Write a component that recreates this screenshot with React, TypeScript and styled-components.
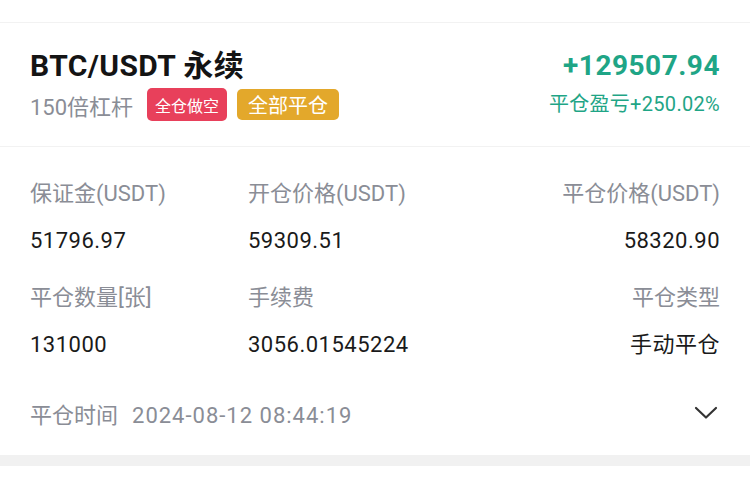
import React from "react";
import styled, { createGlobalStyle } from "styled-components";

const Global = createGlobalStyle`
  html, body { margin: 0; padding: 0; background: #ffffff; }
  body { font-family: Roboto, "Noto Sans CJK SC", sans-serif; -webkit-font-smoothing: antialiased; }
`;

const Page = styled.div`
  width: 750px;
  height: 481px;
  background: #fff;
  display: flex;
  flex-direction: column;
  overflow: hidden;
`;

const TopStrip = styled.div`
  height: 22px;
  border-bottom: 1px solid #f2f2f2;
  flex-shrink: 0;
`;

const Header = styled.div`
  display: flex;
  justify-content: space-between;
  padding: 26px 30px 25px 30px;
  border-bottom: 1px solid #f2f2f2;
`;

const Col = styled.div<{ $align?: "left" | "right" }>`
  display: flex;
  flex-direction: column;
  align-items: ${(p) => (p.$align === "right" ? "flex-end" : "flex-start")};
`;

const Title = styled.div`
  font-size: 30px;
  font-weight: 700;
  line-height: 34px;
  color: #141414;
  letter-spacing: 0.4px;
`;

const SubRow = styled.div`
  display: flex;
  align-items: center;
  gap: 10px;
  margin-top: 5px;
  height: 33px;
`;

const Leverage = styled.span`
  font-size: 22px;
  color: #8a8d96;
  margin-right: 4px;
`;

const Badge = styled.span<{ $bg: string; $size: number; $h: number; $px: number }>`
  display: inline-flex;
  align-items: center;
  justify-content: center;
  height: ${(p) => p.$h}px;
  padding: 0 ${(p) => p.$px}px;
  background: ${(p) => p.$bg};
  color: #fff;
  font-size: ${(p) => p.$size}px;
  border-radius: 5px;
`;

const Pnl = styled.div`
  font-size: 28px;
  font-weight: 700;
  line-height: 34px;
  color: #1fa586;
  letter-spacing: 0.5px;
`;

const PnlRate = styled.div`
  font-size: 20px;
  line-height: 33px;
  margin-top: 5px;
  color: #1fa586;
  letter-spacing: 0.3px;
`;

const Grid = styled.div`
  display: grid;
  grid-template-columns: 218px 1fr 1fr;
  padding: 33px 30px 0 30px;
  row-gap: 29px;
`;

const Cell = styled.div<{ $right?: boolean }>`
  display: flex;
  flex-direction: column;
  gap: 19px;
  align-items: ${(p) => (p.$right ? "flex-end" : "flex-start")};
`;

const Label = styled.div`
  font-size: 22px;
  line-height: 28px;
  color: #8a8d96;
`;

const Value = styled.div`
  font-size: 22px;
  line-height: 28px;
  color: #1a1a1a;
  letter-spacing: 0.5px;
`;

const TimeRow = styled.div`
  display: flex;
  align-items: center;
  justify-content: space-between;
  padding: 0 32px 0 30px;
  margin-top: 40px;
  height: 28px;
`;

const TimeLabel = styled.span`
  font-size: 22px;
  color: #8a8d96;
  margin-right: 14px;
`;

const TimeValue = styled.span`
  font-size: 22px;
  color: #8a8d96;
  letter-spacing: 1px;
`;

const Band = styled.div`
  margin-top: 28px;
  height: 11px;
  background: #f1f1f1;
  flex-shrink: 0;
`;

const Chevron = () => (
  <svg width="24" height="14" viewBox="0 0 24 14" fill="none">
    <path d="M2 2 L12 11.5 L22 2" stroke="#333" strokeWidth="2.2" strokeLinecap="round" strokeLinejoin="round" />
  </svg>
);

const items = [
  { label: "保证金(USDT)", value: "51796.97" },
  { label: "开仓价格(USDT)", value: "59309.51" },
  { label: "平仓价格(USDT)", value: "58320.90", right: true },
  { label: "平仓数量[张]", value: "131000" },
  { label: "手续费", value: "3056.01545224" },
  { label: "平仓类型", value: "手动平仓", right: true },
];

export default function App() {
  return (
    <>
      <Global />
      <Page>
        <TopStrip />
        <Header>
          <Col>
            <Title>BTC/USDT 永续</Title>
            <SubRow>
              <Leverage>150倍杠杆</Leverage>
              <Badge $bg="#e8405b" $size={16} $h={33} $px={8}>全仓做空</Badge>
              <Badge $bg="#e3a82b" $size={20} $h={31} $px={11}>全部平仓</Badge>
            </SubRow>
          </Col>
          <Col $align="right">
            <Pnl>+129507.94</Pnl>
            <PnlRate>平仓盈亏+250.02%</PnlRate>
          </Col>
        </Header>
        <Grid>
          {items.map((it) => (
            <Cell key={it.label} $right={it.right}>
              <Label>{it.label}</Label>
              <Value>{it.value}</Value>
            </Cell>
          ))}
        </Grid>
        <TimeRow>
          <div>
            <TimeLabel>平仓时间</TimeLabel>
            <TimeValue>2024-08-12 08:44:19</TimeValue>
          </div>
          <Chevron />
        </TimeRow>
        <Band />
      </Page>
    </>
  );
}
